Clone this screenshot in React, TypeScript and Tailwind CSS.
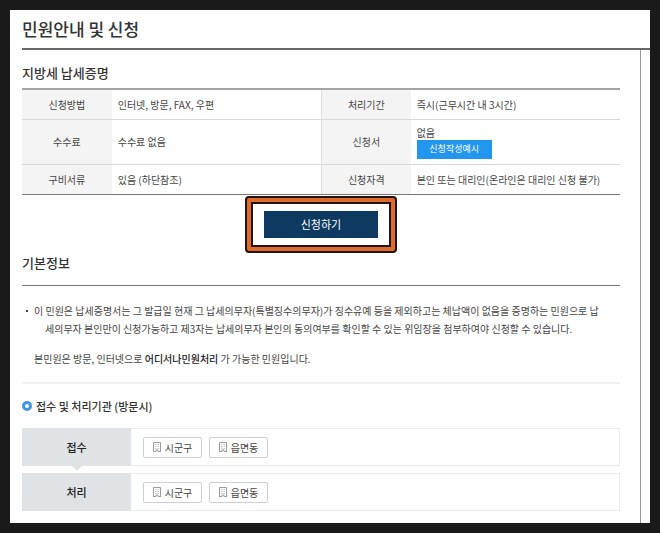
import { ReactNode } from "react";
import clsx from "clsx";

const offices = ["시군구", "읍면동"];

const steps = ["접수", "처리"];

function BuildingIcon() {
  return (
    <svg
      className="h-[10px] w-2 shrink-0"
      viewBox="0 0 8 10"
      fill="none"
      stroke="#9c9c9c"
      aria-hidden="true"
    >
      <path d="M.5 10V.5h7V10" />
      <path d="M0 9.5h3V8h2v1.5h3" />
      <path
        stroke="#c4c4c4"
        d="M2 2.5h1M3.5 2.5h1M5 2.5h1M2 4.5h1M3.5 4.5h1M5 4.5h1M2 6.5h1M3.5 6.5h1M5 6.5h1"
      />
    </svg>
  );
}

function HeadCell({ children, divided }: { children: ReactNode; divided?: boolean }) {
  return (
    <th
      scope="row"
      className={clsx(
        "w-[15%] border-b border-[#d9d9d9] bg-[#f4f4f4] font-normal",
        divided && "border-l border-l-[#dedede]"
      )}
    >
      {children}
    </th>
  );
}

function Cell({ children }: { children: ReactNode }) {
  return (
    <td className="w-[35%] border-b border-[#d9d9d9] pl-[6px]">{children}</td>
  );
}

function InfoTable() {
  return (
    <table className="w-full table-fixed border-separate border-spacing-0 border-t-2 border-b border-t-[#a3a3a3] border-b-[#777] leading-4">
      <tbody>
        <tr className="h-[30px]">
          <HeadCell>신청방법</HeadCell>
          <Cell>인터넷, 방문, FAX, 우편</Cell>
          <HeadCell divided>처리기간</HeadCell>
          <Cell>즉시(근무시간 내 3시간)</Cell>
        </tr>
        <tr className="h-[45px]">
          <HeadCell>수수료</HeadCell>
          <Cell>수수료 없음</Cell>
          <HeadCell divided>신청서</HeadCell>
          <Cell>
            <div className="leading-[14px]">없음</div>
            <button className="block h-[19px] w-[75px] bg-[#2196ee] text-[9px] text-white">
              신청작성예시
            </button>
          </Cell>
        </tr>
        <tr className="h-[29px] *:border-b-0">
          <HeadCell>구비서류</HeadCell>
          <Cell>있음 (하단참조)</Cell>
          <HeadCell divided>신청자격</HeadCell>
          <Cell>본인 또는 대리인(온라인은 대리인 신청 불가)</Cell>
        </tr>
      </tbody>
    </table>
  );
}

function StepRow({ label, arrow }: { label: string; arrow?: boolean }) {
  return (
    <div className="flex h-[38px] border border-l-0 border-[#ececec]">
      <div className="relative -my-px flex w-[109px] items-center justify-center bg-[#dfe3e6] text-[11px] font-medium text-[#222]">
        {label}
        {arrow && (
          <svg
            className="absolute top-full h-[5px] w-[10px]"
            viewBox="0 0 10 5"
            fill="#dfe3e6"
            aria-hidden="true"
          >
            <path d="M0 0h10L5 5z" />
          </svg>
        )}
      </div>
      <div className="flex items-center gap-[7px] pl-3">
        {offices.map((office) => (
          <button
            key={office}
            className="flex h-[21px] w-[59px] items-center justify-center gap-1 rounded-xs border border-[#cfcfcf] bg-white"
          >
            <BuildingIcon />
            {office}
          </button>
        ))}
      </div>
    </div>
  );
}

export default function App() {
  return (
    <div className="flex min-h-screen flex-col border-[10px] border-[#1a1a1a] bg-white pl-3 font-['Noto_Sans_CJK_KR',sans-serif] text-[10px] text-[#444]">
      <h1 className="flex h-10 items-center border-b-2 border-[#666] text-[17px] font-medium text-[#333]">
        민원안내 및 신청
      </h1>
      <div className="flex flex-1 pr-[9px]">
        <main className="flex-1 border-r border-[#999] pr-5 pb-[11px]">
          <h2 className="flex h-[38px] items-center pt-2 text-[13px] font-medium text-[#333]">
            지방세 납세증명
          </h2>
          <InfoTable />

          <div className="mx-auto mt-px flex h-[57px] w-[152px] rounded-sm border-2 border-[#24130b] bg-[#dc6b30] p-1">
            <div className="flex flex-1 items-center justify-center border-2 border-[#24130b] bg-white">
              <button className="h-[27px] w-[114px] bg-[#0e3a62] text-[11px] text-white">
                신청하기
              </button>
            </div>
          </div>

          <h2 className="flex h-[33px] items-center border-b border-[#777] pb-3 text-[13px] font-medium text-[#333]">
            기본정보
          </h2>
          <div className="border-b-2 border-[#f0f0f0] pt-4 pr-4 pb-[14px] pl-3 leading-[18px]">
            <ul className="-ml-2">
              <li className="flex gap-[6px]">
                <span className="mt-2 size-[2px] shrink-0 bg-[#444]" />
                <p className="pl-[11px] -indent-[11px] break-all">
                  이 민원은 납세증명서는 그 발급일 현재 그 납세의무자(특별징수의무자)가 징수유예 등을 제외하고는 체납액이 없음을 증명하는 민원으로 납세의무자 본인만이 신청가능하고 제3자는 납세의무자 본인의 동의여부를 확인할 수 있는 위임장을 첨부하여야 신청할 수 있습니다.
                </p>
              </li>
            </ul>
            <p className="mt-3">
              본민원은 방문, 인터넷으로{" "}
              <strong className="font-medium text-[#222]">어디서나민원처리</strong> 가
              가능한 민원입니다.
            </p>
          </div>

          <h3 className="flex h-11 items-center gap-1 text-[11px] font-medium text-[#333]">
            <span className="size-[10px] rounded-full border-3 border-[#3f97e0]" />
            접수 및 처리기관 (방문시)
          </h3>
          <div className="flex flex-col gap-[7px]">
            {steps.map((step, i) => (
              <StepRow key={step} label={step} arrow={i < steps.length - 1} />
            ))}
          </div>
        </main>
      </div>
    </div>
  );
}
